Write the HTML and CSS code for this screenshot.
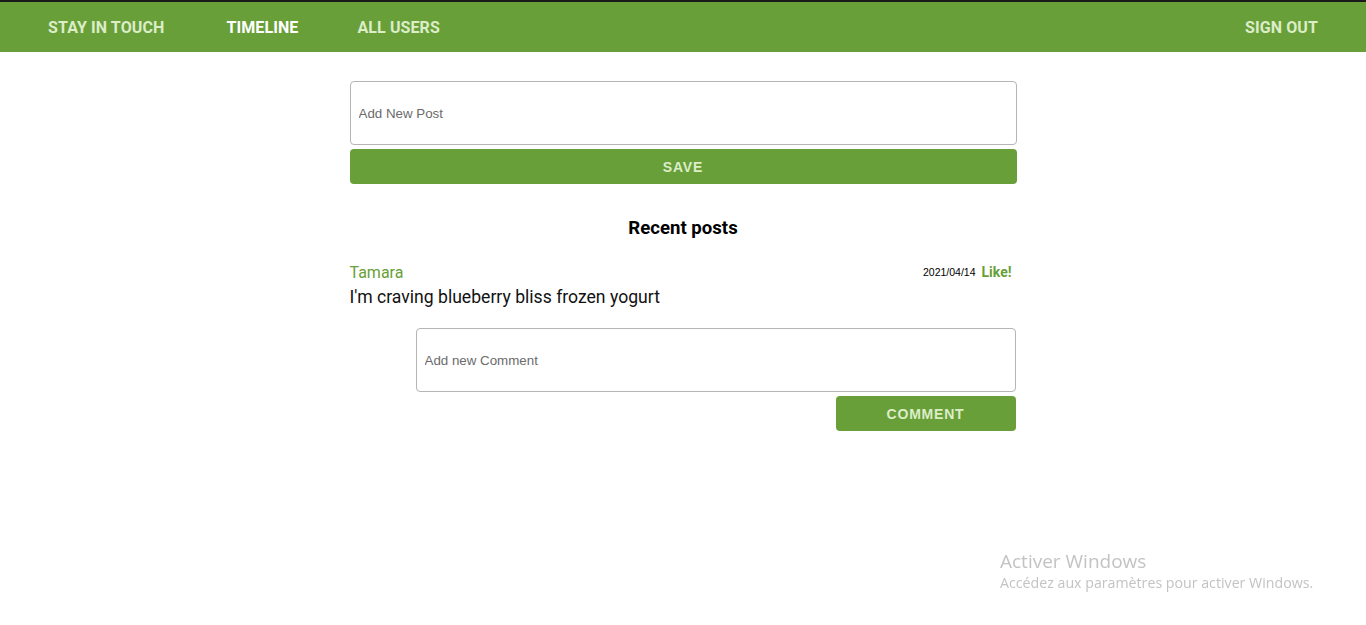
FILE: index.html
```html
<!DOCTYPE html>
<html lang="en">
<head>
<meta charset="utf-8">
<title>Stay in touch</title>
<link rel="stylesheet" href="styles.css">
</head>
<body>
<div class="topstrip"></div>
<nav class="navbar">
  <div class="nav-left">
    <a class="nav-link brand" href="#">STAY IN TOUCH</a>
    <a class="nav-link active" href="#">TIMELINE</a>
    <a class="nav-link" href="#">ALL USERS</a>
  </div>
  <a class="nav-link" href="#">SIGN OUT</a>
</nav>
<main class="container">
  <form class="post-form">
    <input class="field" type="text" placeholder="Add New Post">
    <button class="btn btn-block" type="button">SAVE</button>
  </form>
  <h2 class="section-title">Recent posts</h2>
  <article class="post">
    <div class="post-head">
      <span class="author">Tamara</span>
      <div class="meta">
        <span class="date">2021/04/14</span>
        <a class="like" href="#">Like!</a>
      </div>
    </div>
    <p class="post-body">I'm craving blueberry bliss frozen yogurt</p>
    <form class="comment-form">
      <input class="field" type="text" placeholder="Add new Comment">
      <button class="btn btn-comment" type="button">COMMENT</button>
    </form>
  </article>
</main>
<div class="watermark">
  <div class="wm-title">Activer Windows</div>
  <div class="wm-sub">Accédez aux paramètres pour activer Windows.</div>
</div>
</body>
</html>
```
FILE: styles.css
```css
* { box-sizing: border-box; }
html, body { margin: 0; padding: 0; background: #fff; }
body { font-family: Roboto, "Liberation Sans", Arial, sans-serif; color: #212529; }

.topstrip { height: 2px; background: #1a1a1a; }

.navbar {
  height: 50px;
  background: #689f38;
  display: flex;
  align-items: center;
  justify-content: space-between;
  padding: 0 48px;
}
.nav-left { display: flex; align-items: center; gap: 59px; }
.nav-link {
  font-family: Roboto, "Liberation Sans", sans-serif;
  font-weight: 700;
  font-size: 16px;
  color: #dcedc8;
  text-decoration: none;
  letter-spacing: 0.1px;
}
.nav-link.brand { margin-right: 3px; }
.nav-link.active { color: #fff; }

.container { width: 667px; margin: 0 auto; padding-top: 29px; }

.post-form { display: flex; flex-direction: column; gap: 4px; }

.field {
  display: block;
  width: 100%;
  height: 64px;
  border: 1px solid #b5b5b5;
  border-radius: 4px;
  padding: 0 8px;
  font-family: "Liberation Sans", Arial, sans-serif;
  font-size: 13.33px;
  color: #333;
  outline: none;
  background: #fff;
}
.field::placeholder { color: #6b6b6b; }

.btn {
  height: 35px;
  border: 0;
  border-radius: 4px;
  background: #689f38;
  color: #dcedc8;
  font-family: "Liberation Sans", Arial, sans-serif;
  font-weight: 700;
  font-size: 14px;
  letter-spacing: 0.8px;
  cursor: pointer;
}
.btn-block { width: 100%; }

.section-title {
  margin: 32px 0 0;
  text-align: center;
  font-family: Roboto, sans-serif;
  font-weight: 700;
  font-size: 18.6px;
  line-height: 24px;
  color: #000;
}

.post { margin-top: 22px; }
.post-head {
  display: flex;
  justify-content: space-between;
  align-items: center;
  padding-right: 5px;
  height: 20px;
}
.author { color: #689f38; font-size: 16px; }
.meta { display: flex; align-items: center; gap: 6px; }
.date { font-family: "Liberation Sans", Arial, sans-serif; font-size: 10.5px; color: #000; }
.like { color: #689f38; font-weight: 700; font-size: 14px; text-decoration: none; }

.post-body {
  margin: 3px 0 0;
  font-size: 17.6px;
  line-height: 24px;
  color: #111;
}

.comment-form {
  width: 600px;
  margin: 19px 1px 0 auto;
  display: flex;
  flex-direction: column;
  align-items: flex-end;
  gap: 4px;
}
.btn-comment { width: 180px; }

.watermark {
  position: fixed;
  left: 1000px;
  top: 549px;
  font-family: "Open Sans", "Noto Sans", sans-serif;
  color: #c3c3c3;
}
.wm-title { font-size: 19px; line-height: 24px; }
.wm-sub { font-size: 14.2px; line-height: 20px; }
```
